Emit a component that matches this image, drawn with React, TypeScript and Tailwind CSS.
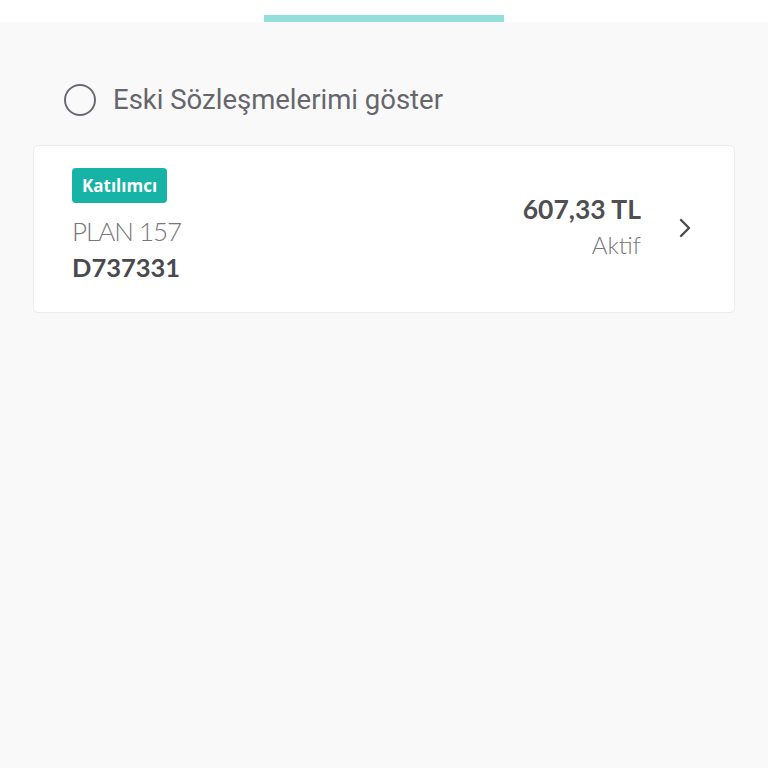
import React from "react";

export default function App() {
  return (
    <div className="w-[768px] h-[768px] bg-[#f9f9fa] overflow-hidden" style={{ fontFamily: "Lato, 'Noto Sans', sans-serif" }}>
      <div className="h-[22px] bg-white relative">
        <div className="absolute left-[264px] top-[15px] w-[240px] h-[7px] bg-[#93dfda]" />
      </div>
      <div className="pt-[56px] pl-[64px] flex items-center h-[44px] box-content">
        <div className="w-[32px] h-[32px] rounded-full border-[2.5px] border-[#6b6b76]" />
        <span className="ml-[17px] text-[27.5px] text-[#66666c]" style={{ fontFamily: "Roboto, sans-serif" }}>
          Eski Sözleşmelerimi göster
        </span>
      </div>
      <div className="mt-[23px] mx-[33px] h-[168px] bg-white border border-[#ececf0] rounded-[5px] flex items-start pl-[38px] pr-[42px] pt-[22px]">
        <div className="flex flex-col items-start">
          <div className="h-[35px] px-[10px] rounded-[4px] bg-[#17b3a7] text-white font-bold text-[17px] flex items-center" style={{ fontFamily: "'Open Sans', sans-serif" }}>
            Katılımcı
          </div>
          <div className="mt-[12px] text-[26px] leading-[32px] font-light text-[#77777c] tracking-[-1px]">PLAN 157</div>
          <div className="mt-[4px] text-[25.5px] leading-[32px] font-bold text-[#4a4a4e]">D737331</div>
        </div>
        <div className="ml-auto flex items-center mt-[25px]">
          <div className="flex flex-col items-end">
            <div className="text-[26.5px] leading-[32px] font-bold text-[#4f4f53]">607,33 TL</div>
            <div className="text-[24px] leading-[32px] font-light text-[#77777c] mt-[4px]">Aktif</div>
          </div>
          <svg className="ml-[37px] mt-[2px]" width="14" height="22" viewBox="0 0 14 22" fill="none">
            <path d="M3 3 L11 11 L3 19" stroke="#4a4a50" strokeWidth="2.4" strokeLinecap="round" strokeLinejoin="round" />
          </svg>
        </div>
      </div>
    </div>
  );
}
